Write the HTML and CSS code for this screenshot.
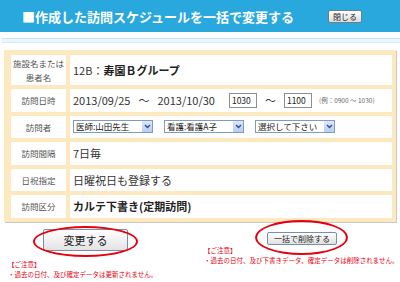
FILE: index.html
```html
<!DOCTYPE html>
<html lang="ja">
<head>
    <meta charset="UTF-8">
    <title>訪問スケジュール一括変更</title>
    <link rel="stylesheet" href="styles.css">
</head>
<body>

<div class="header">
    <div class="title">■作成した訪問スケジュールを一括で変更する</div>
    <button class="close-btn">閉じる</button>
</div>
<div class="band"></div>

<div class="form-box">
    <table class="form-table">
        <tr class="row-tall">
            <th>施設名または<br>患者名</th>
            <td>12B：<b>寿園Ｂグループ</b></td>
        </tr>
        <tr>
            <th>訪問日時</th>
            <td>
                <div class="line">
                    <span>2013/09/25</span>
                    <span class="tilde">～</span>
                    <span>2013/10/30</span>
                    <span class="time-box first">1030</span>
                    <span class="tilde">～</span>
                    <span class="time-box">1100</span>
                    <span class="hint">(例：0900 ～ 1030)</span>
                </div>
            </td>
        </tr>
        <tr>
            <th>訪問者</th>
            <td>
                <div class="line selects">
                    <div class="select">医師:山田先生<span class="arrow"><svg width="7" height="5" viewBox="0 0 7 5"><path d="M1 1 L3.5 3.5 L6 1" fill="none" stroke="#2d4f8c" stroke-width="1.4"/></svg></span></div>
                    <div class="select">看護:看護A子<span class="arrow"><svg width="7" height="5" viewBox="0 0 7 5"><path d="M1 1 L3.5 3.5 L6 1" fill="none" stroke="#2d4f8c" stroke-width="1.4"/></svg></span></div>
                    <div class="select">選択して下さい<span class="arrow"><svg width="7" height="5" viewBox="0 0 7 5"><path d="M1 1 L3.5 3.5 L6 1" fill="none" stroke="#2d4f8c" stroke-width="1.4"/></svg></span></div>
                </div>
            </td>
        </tr>
        <tr>
            <th>訪問間隔</th>
            <td>7日毎</td>
        </tr>
        <tr>
            <th>日祝指定</th>
            <td>日曜祝日も登録する</td>
        </tr>
        <tr>
            <th>訪問区分</th>
            <td><b>カルテ下書き(定期訪問)</b></td>
        </tr>
    </table>
</div>

<div class="actions">
    <div class="action-col left">
        <div class="btn-wrap">
            <button class="btn-change">変更する</button>
            <span class="mark mark-left"></span>
        </div>
        <div class="notes notes-left">
            <div>【ご注意】</div>
            <div>・過去の日付、及び確定データは更新されません。</div>
        </div>
    </div>
    <div class="action-col right">
        <div class="btn-wrap">
            <button class="btn-delete">一括で削除する</button>
            <span class="mark mark-right"></span>
        </div>
        <div class="notes notes-right">
            <div>【ご注意】</div>
            <div>・過去の日付、及び下書きデータ、確定データは削除されません。</div>
        </div>
    </div>
</div>

</body>
</html>
```

FILE: styles.css
```css
body {
    margin: 0;
    width: 400px;
    font-family: "Noto Sans CJK JP", "Noto Sans", sans-serif;
    color: #333;
    background: #fff;
}

.header {
    height: 32px;
    background: #29a8de;
    display: flex;
    align-items: center;
    padding-left: 22px;
}

.title {
    color: #fff;
    font-size: 13px;
    font-weight: bold;
}

.close-btn {
    margin-left: auto;
    margin-right: 38px;
    width: 34px;
    height: 13px;
    padding: 0;
    font-family: inherit;
    font-size: 8px;
    line-height: 11px;
    color: #222;
    border: 1px solid #6d7f8c;
    border-radius: 2px;
    background: linear-gradient(#ffffff, #dcdcdc);
}

.band {
    margin: 6px 0 0 2px;
    height: 3px;
    border-top: 1px solid #c8e6f5;
    border-bottom: 1px solid #d6edf8;
    background: #eaf6fc;
}

.form-box {
    margin: 7px 4px 0 4px;
    padding: 1px 0 0 3px;
    background: #fde9c0;
    box-shadow: 1px 1px 0 #c9c9c9;
}

.form-table {
    width: 100%;
    border-spacing: 4px;
}

.form-table th {
    width: 55px;
    height: 22.5px;
    padding: 0;
    background: #fff;
    font-size: 8.5px;
    font-weight: normal;
    color: #555;
    line-height: 14px;
    text-align: center;
}

.form-table td {
    height: 22.5px;
    padding: 0 0 0 3px;
    background: #fff;
    font-size: 11px;
    color: #333;
}

.form-table .row-tall th,
.form-table .row-tall td {
    height: 30px;
}

.form-table b {
    color: #222;
}

.line {
    display: flex;
    align-items: center;
}

.tilde {
    margin: 0 8px;
}

.time-box {
    width: 24px;
    height: 13px;
    border: 1px solid #8e8e8e;
    padding-left: 2px;
    font-size: 8.5px;
    line-height: 13px;
    color: #222;
}

.time-box.first {
    margin-left: 14px;
}

.hint {
    margin-left: 7px;
    font-size: 6.5px;
    color: #666;
}

.selects {
    gap: 11px;
}

.select {
    width: 76px;
    height: 11px;
    border: 1px solid #7f9db9;
    font-size: 8.5px;
    line-height: 11px;
    padding-left: 2px;
    position: relative;
    color: #222;
}

.select .arrow {
    position: absolute;
    right: 0;
    top: 0;
    width: 10px;
    height: 11px;
    background: linear-gradient(#dbe7fb, #b8cdf3);
    display: flex;
    align-items: center;
    justify-content: center;
}

.actions {
    display: flex;
}

.action-col {
    width: 200px;
}

.action-col.left {
    padding-top: 7px;
}

.action-col.right {
    padding-top: 10px;
}

.btn-wrap {
    position: relative;
    width: fit-content;
}

.left .btn-wrap {
    margin-left: 43px;
}

.right .btn-wrap {
    margin-left: 67px;
}

.btn-change {
    display: block;
    width: 85px;
    height: 22px;
    padding: 0;
    font-family: inherit;
    font-size: 11px;
    color: #222;
    border: 1px solid #7a8fa3;
    border-radius: 2px;
    background: linear-gradient(#ffffff, #e3e3e3);
}

.btn-delete {
    display: block;
    width: 70px;
    height: 13px;
    padding: 0;
    font-family: inherit;
    font-size: 8px;
    line-height: 11px;
    color: #222;
    border: 1px solid #7a8fa3;
    border-radius: 2px;
    background: linear-gradient(#ffffff, #e0e0e0);
}

.mark {
    position: absolute;
    border: 2px solid #e60012;
    border-radius: 50%;
}

.mark-left {
    left: -10px;
    top: -3px;
    width: 101px;
    height: 27px;
}

.mark-right {
    left: -12px;
    top: -12px;
    width: 89px;
    height: 31px;
}

.notes {
    color: #e60012;
    font-size: 6.5px;
    line-height: 10px;
}

.notes-left {
    margin-top: 8px;
    padding-left: 8px;
}

.notes-right {
    margin-top: 0;
    padding-left: 4px;
}
```
